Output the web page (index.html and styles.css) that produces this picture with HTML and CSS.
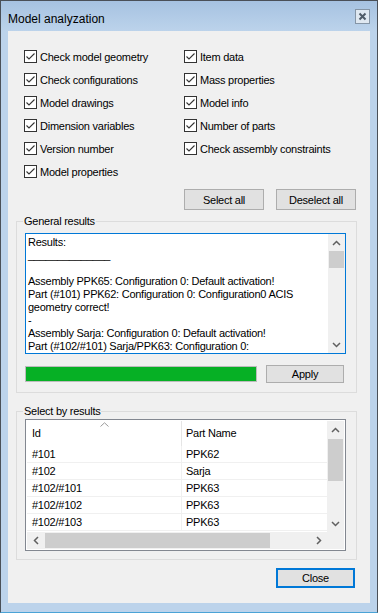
FILE: index.html
```html
<!DOCTYPE html>
<html>
	<head>
		<meta charset="UTF-8">
		<title>Model analyzation</title>
		<link rel="stylesheet" href="styles.css">
	</head>
	<body>
		<div class="window">
			<div class="titlebar">
				<span class="title">Model analyzation</span>
				<span class="title-close">
					<svg width="15" height="15" viewBox="0 0 15 15"><path d="M4.5 4.5 L10.5 10.5 M10.5 4.5 L4.5 10.5" stroke="#4f5b68" stroke-width="2" fill="none"/></svg>
				</span>
			</div>
			<div class="client">
				<div class="options">
					<div class="opt-col first">
						<label class="check"><span class="box"><svg width="11" height="11" viewBox="0 0 11 11"><path d="M1.5 5.5 L4 8 L9.5 2.5" stroke="#333" stroke-width="1.1" fill="none"/></svg></span>Check model geometry</label>
						<label class="check"><span class="box"><svg width="11" height="11" viewBox="0 0 11 11"><path d="M1.5 5.5 L4 8 L9.5 2.5" stroke="#333" stroke-width="1.1" fill="none"/></svg></span>Check configurations</label>
						<label class="check"><span class="box"><svg width="11" height="11" viewBox="0 0 11 11"><path d="M1.5 5.5 L4 8 L9.5 2.5" stroke="#333" stroke-width="1.1" fill="none"/></svg></span>Model drawings</label>
						<label class="check"><span class="box"><svg width="11" height="11" viewBox="0 0 11 11"><path d="M1.5 5.5 L4 8 L9.5 2.5" stroke="#333" stroke-width="1.1" fill="none"/></svg></span>Dimension variables</label>
						<label class="check"><span class="box"><svg width="11" height="11" viewBox="0 0 11 11"><path d="M1.5 5.5 L4 8 L9.5 2.5" stroke="#333" stroke-width="1.1" fill="none"/></svg></span>Version number</label>
						<label class="check"><span class="box"><svg width="11" height="11" viewBox="0 0 11 11"><path d="M1.5 5.5 L4 8 L9.5 2.5" stroke="#333" stroke-width="1.1" fill="none"/></svg></span>Model properties</label>
					</div>
					<div class="opt-col">
						<label class="check"><span class="box"><svg width="11" height="11" viewBox="0 0 11 11"><path d="M1.5 5.5 L4 8 L9.5 2.5" stroke="#333" stroke-width="1.1" fill="none"/></svg></span>Item data</label>
						<label class="check"><span class="box"><svg width="11" height="11" viewBox="0 0 11 11"><path d="M1.5 5.5 L4 8 L9.5 2.5" stroke="#333" stroke-width="1.1" fill="none"/></svg></span>Mass properties</label>
						<label class="check"><span class="box"><svg width="11" height="11" viewBox="0 0 11 11"><path d="M1.5 5.5 L4 8 L9.5 2.5" stroke="#333" stroke-width="1.1" fill="none"/></svg></span>Model info</label>
						<label class="check"><span class="box"><svg width="11" height="11" viewBox="0 0 11 11"><path d="M1.5 5.5 L4 8 L9.5 2.5" stroke="#333" stroke-width="1.1" fill="none"/></svg></span>Number of parts</label>
						<label class="check"><span class="box"><svg width="11" height="11" viewBox="0 0 11 11"><path d="M1.5 5.5 L4 8 L9.5 2.5" stroke="#333" stroke-width="1.1" fill="none"/></svg></span>Check assembly constraints</label>
					</div>
				</div>

				<div class="select-buttons">
					<button class="btn btn-select">Select all</button>
					<button class="btn btn-select">Deselect all</button>
				</div>

				<fieldset class="group">
					<legend>General results</legend>
					<div class="textbox">
						<div class="results-text">
							<div class="line">Results:</div>
							<div class="line">______________</div>
							<div class="line">&nbsp;</div>
							<div class="line">Assembly PPK65: Configuration 0: Default activation!</div>
							<div class="line">Part (#101) PPK62: Configuration 0: Configuration0 ACIS</div>
							<div class="line">geometry correct!</div>
							<div class="line">-</div>
							<div class="line">Assembly Sarja: Configuration 0: Default activation!</div>
							<div class="line">Part (#102/#101) Sarja/PPK63: Configuration 0:</div>
						</div>
						<div class="vscroll">
							<div class="sb-btn"><svg width="9" height="6" viewBox="0 0 9 6"><path d="M1 5 L4.5 1.5 L8 5" stroke="#606060" stroke-width="1.5" fill="none"/></svg></div>
							<div class="sb-thumb text-thumb"></div>
							<div class="sb-space"></div>
							<div class="sb-btn"><svg width="9" height="6" viewBox="0 0 9 6"><path d="M1 1 L4.5 4.5 L8 1" stroke="#606060" stroke-width="1.5" fill="none"/></svg></div>
						</div>
					</div>
					<div class="progress-row">
						<div class="progress"><div class="progress-fill"></div></div>
						<button class="btn btn-apply">Apply</button>
					</div>
				</fieldset>

				<fieldset class="group group-list">
					<legend>Select by results</legend>
					<div class="listview">
						<div class="lv-main">
							<div class="lv-row lv-header">
								<div class="lv-cell col-id">Id<svg class="sort-arrow" width="9" height="5" viewBox="0 0 9 5"><path d="M0.5 4.5 L4.5 0.8 L8.5 4.5" stroke="#9a9a9a" stroke-width="1" fill="none"/></svg></div>
								<div class="lv-cell col-name">Part Name</div>
							</div>
							<div class="lv-row"><div class="lv-cell col-id">#101</div><div class="lv-cell col-name">PPK62</div></div>
							<div class="lv-row"><div class="lv-cell col-id">#102</div><div class="lv-cell col-name">Sarja</div></div>
							<div class="lv-row"><div class="lv-cell col-id">#102/#101</div><div class="lv-cell col-name">PPK63</div></div>
							<div class="lv-row"><div class="lv-cell col-id">#102/#102</div><div class="lv-cell col-name">PPK63</div></div>
							<div class="lv-row"><div class="lv-cell col-id">#102/#103</div><div class="lv-cell col-name">PPK63</div></div>
						</div>
						<div class="vscroll">
							<div class="sb-btn"><svg width="9" height="6" viewBox="0 0 9 6"><path d="M1 5 L4.5 1.5 L8 5" stroke="#606060" stroke-width="1.5" fill="none"/></svg></div>
							<div class="sb-thumb list-thumb"></div>
							<div class="sb-space"></div>
							<div class="sb-btn"><svg width="9" height="6" viewBox="0 0 9 6"><path d="M1 1 L4.5 4.5 L8 1" stroke="#606060" stroke-width="1.5" fill="none"/></svg></div>
						</div>
						<div class="hscroll">
							<div class="sb-btn"><svg width="6" height="9" viewBox="0 0 6 9"><path d="M5 1 L1.5 4.5 L5 8" stroke="#606060" stroke-width="1.5" fill="none"/></svg></div>
							<div class="sb-thumb h-thumb"></div>
							<div class="sb-space"></div>
							<div class="sb-btn"><svg width="6" height="9" viewBox="0 0 6 9"><path d="M1 1 L4.5 4.5 L1 8" stroke="#606060" stroke-width="1.5" fill="none"/></svg></div>
						</div>
						<div class="sb-corner"></div>
					</div>
				</fieldset>

				<div class="footer">
					<button class="btn btn-close">Close</button>
				</div>
			</div>
		</div>
	</body>
</html>
```

FILE: styles.css
```css
*{
	margin: 0px;
	padding: 0px;
	box-sizing: border-box;
}
body{
	font-family: "Liberation Sans", Arial, sans-serif;
	font-size: 11px;
	color: #000;
	background: #fff;
}
.window{
	width: 378px;
	height: 613px;
	border: 1px solid #4a5058;
	border-bottom-color: #4aa3d6;
	padding: 0 7px 9px 7px;
	background: linear-gradient(to bottom, #a6c2e1 0px, #bcd3eb 30px, #bcd3eb 100%);
}
.titlebar{
	height: 30px;
	display: flex;
	justify-content: space-between;
	align-items: flex-start;
	padding-top: 10px;
}
.title{
	font-size: 12px;
	line-height: 16px;
	color: #000;
}
.title-close{
	width: 15px;
	height: 15px;
	margin-top: -2px;
	border: 1px solid #8595a6;
	background: #dfe8f1;
	display: flex;
	align-items: center;
	justify-content: center;
}
.title-close svg{
	display: block;
	margin: -1px;
}
.client{
	height: 572px;
	background: #f0f0f0;
	padding-top: 14px;
	letter-spacing: -0.25px;
}

/* checkboxes */
.options{
	display: flex;
	padding-left: 16px;
}
.opt-col.first{
	width: 160px;
}
.check{
	display: flex;
	align-items: center;
	height: 23px;
	gap: 3px;
	white-space: nowrap;
}
.box{
	width: 13px;
	height: 13px;
	border: 1px solid #333;
	background: #fff;
	display: flex;
}
.box svg{
	display: block;
}

/* buttons */
.btn{
	font-family: "Liberation Sans", Arial, sans-serif;
	font-size: 11px;
	letter-spacing: -0.25px;
	color: #000;
	background: #e1e1e1;
	border: 1px solid #adadad;
}
.select-buttons{
	display: flex;
	justify-content: flex-end;
	gap: 12px;
	margin-top: 6px;
	padding-right: 14px;
}
.btn-select{
	width: 80px;
	height: 21px;
}
.btn-apply{
	width: 78px;
	height: 18px;
}
.btn-close{
	width: 79px;
	height: 20px;
	border: 2px solid #0078d7;
}

/* group boxes */
.group{
	margin: 4px 13px 0 8px;
	padding: 5px 10px 9px 8px;
	border: 1px solid #dcdcdc;
	min-width: 0;
}
.group legend{
	line-height: 14px;
	padding: 0 1px;
	margin-left: -2px;
}
.group-list{
	margin-top: 11px;
	padding-top: 1px;
	padding-bottom: 8px;
}

/* results text box */
.textbox{
	width: 321px;
	height: 121px;
	border: 1px solid #0078d7;
	background: #fff;
	display: flex;
}
.results-text{
	flex: 1;
	padding: 2px 0 0 2px;
	line-height: 13px;
	overflow: hidden;
}
.line{
	white-space: pre;
}
.vscroll{
	width: 17px;
	background: #f0f0f0;
	display: flex;
	flex-direction: column;
}
.sb-btn{
	flex: 0 0 17px;
	display: flex;
	align-items: center;
	justify-content: center;
}
.sb-btn svg{
	display: block;
}
.sb-space{
	flex: 1;
}
.sb-thumb{
	background: #cdcdcd;
}
.text-thumb{
	height: 17px;
	margin: 0 1px 0 1px;
}
.progress-row{
	display: flex;
	justify-content: space-between;
	align-items: center;
	margin-top: 11px;
	width: 321px;
	padding-right: 2px;
}
.progress{
	width: 232px;
	height: 16px;
	border: 1px solid #bcbcbc;
	background: #e6e6e6;
}
.progress-fill{
	height: 100%;
	width: 100%;
	background: #06b025;
}

/* list view */
.listview{
	width: 321px;
	height: 132px;
	border: 1px solid #828790;
	padding: 1px;
	background: #fff;
	display: grid;
	grid-template-columns: 1fr 17px;
	grid-template-rows: 1fr 17px;
}
.lv-main{
	overflow: hidden;
}
.lv-row{
	display: flex;
	height: 17px;
	line-height: 16px;
	border-bottom: 1px solid #f0f0f0;
}
.lv-header{
	height: 25px;
	line-height: 25px;
	border-bottom: none;
}
.lv-cell{
	white-space: nowrap;
	overflow: hidden;
}
.col-id{
	width: 155px;
	padding-left: 5px;
	border-right: 1px solid #f0f0f0;
	position: relative;
}
.lv-header .col-id{
	border-right-color: #e5e5e5;
}
.col-name{
	flex: 1;
	padding-left: 4px;
}
.sort-arrow{
	position: absolute;
	left: 73px;
	top: 1px;
}
.list-thumb{
	height: 42px;
	margin: 1px 1px 0 1px;
}
.hscroll{
	background: #f0f0f0;
	display: flex;
}
.h-thumb{
	width: 225px;
	margin: 1px 0 1px 1px;
}
.sb-corner{
	background: #f0f0f0;
}

.footer{
	display: flex;
	justify-content: flex-end;
	margin-top: 8px;
	padding-right: 15px;
}
```
